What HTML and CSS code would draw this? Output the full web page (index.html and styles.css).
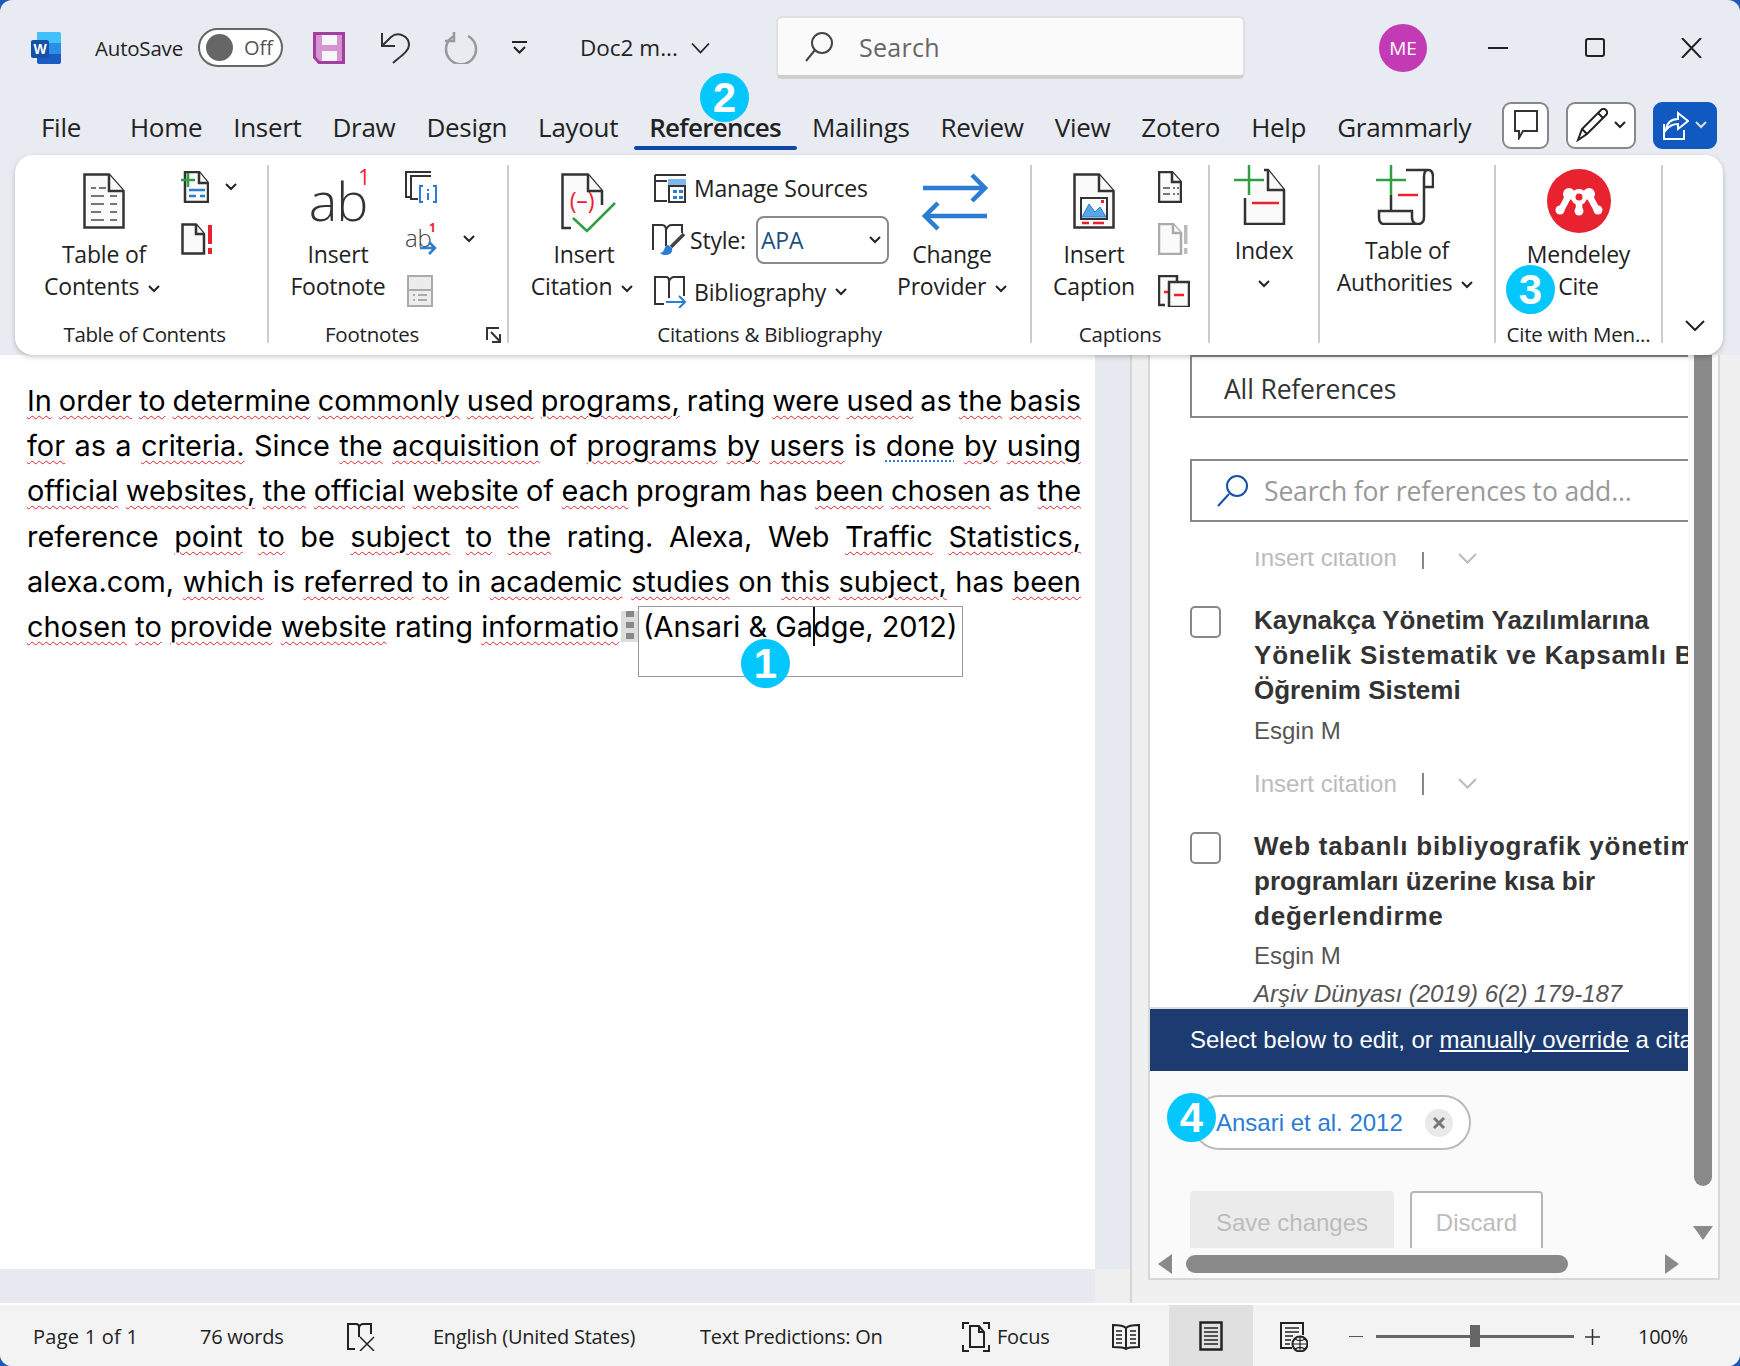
FILE: index.html
```html
<!DOCTYPE html>
<html lang="en">
<head>
<meta charset="utf-8"/>
<title>Doc2 - Word</title>
<link rel="stylesheet" href="styles.css">
</head>
<body>
<svg class="sprite"><symbol id="chev" viewBox="0 0 12 8"><path d="M1 1l5 5 5-5" fill="none" stroke="#222" stroke-width="2"/></symbol></svg>
<div class="app">

<!-- title bar -->
<header class="titlebar">
    <svg class="t-word" width="30" height="32" viewBox="0 0 30 32">
        <path d="M6 0h22a2 2 0 0 1 2 2v9H6z" fill="#41c0fa"/>
        <rect x="6" y="11" width="24" height="11" fill="#2a90e6"/>
        <path d="M6 22h24v8a2 2 0 0 1-2 2H8a2 2 0 0 1-2-2z" fill="#1a5cc4"/>
        <rect x="0" y="8" width="18" height="18" rx="2" fill="#144fa8"/>
        <text x="9" y="22" text-anchor="middle" class="svgword">W</text>
    </svg>
    <span class="t-auto">AutoSave</span>
    <div class="toggle"><i></i><span>Off</span></div>
    <svg class="t-save" width="32" height="32" viewBox="0 0 32 32">
        <path d="M1.500 1.500h29v29H6l-4.500-5z" fill="#d693d2" stroke="#a23ea0" stroke-width="3"/>
        <rect x="9" y="3" width="15" height="10" fill="#f6f6f8"/>
        <rect x="9" y="19" width="15" height="10" fill="#f6f6f8"/>
    </svg>
    <svg class="t-undo" width="32" height="32" viewBox="0 0 32 32" fill="none" stroke="#333" stroke-width="2">
        <path d="M3 1V14H16"/><path d="M3 14L12 5C19-1 30 4 30 13C30 19 22 24 14 31"/>
    </svg>
    <svg class="t-redo" width="34" height="32" viewBox="0 0 34 32" fill="none" stroke="#999" stroke-width="2.500">
        <path d="M10 4A15 15 0 1 0 24 4"/><path d="M10 0V9H1"/>
    </svg>
    <svg class="t-more" width="15" height="13" viewBox="0 0 15 13" fill="none" stroke="#222" stroke-width="2">
        <path d="M0 1H15"/><path d="M2 6l5.500 5.500L13 6"/>
    </svg>
    <span class="t-doc">Doc2 m...</span>
    <svg class="t-docchev" width="19" height="12" viewBox="0 0 19 12" fill="none" stroke="#222" stroke-width="1.800"><path d="M1 1.500l8.500 9 8.500-9"/></svg>
    <div class="t-search">
        <svg width="28" height="30" viewBox="0 0 28 30" fill="none" stroke="#444" stroke-width="2"><circle cx="17" cy="11" r="10"/><path d="M10 18L1 29"/></svg>
        <span>Search</span>
    </div>
    <div class="avatar">ME</div>
    <svg class="w-min" width="20" height="2"><rect width="20" height="2" fill="#222"/></svg>
    <svg class="w-max" width="20" height="19" viewBox="0 0 20 19" fill="none" stroke="#222" stroke-width="2"><rect x="1" y="1" width="18" height="17" rx="2"/></svg>
    <svg class="w-close" width="21" height="20" viewBox="0 0 21 20" fill="none" stroke="#222" stroke-width="2"><path d="M1 0L20 20M20 0L1 20"/></svg>
</header>

<!-- tabs -->
<nav class="tabs">
    <span class="tab tab-file">File</span>
    <span class="tab">Home</span>
    <span class="tab">Insert</span>
    <span class="tab">Draw</span>
    <span class="tab">Design</span>
    <span class="tab">Layout</span>
    <span class="tab on">References</span>
    <span class="tab">Mailings</span>
    <span class="tab">Review</span>
    <span class="tab">View</span>
    <span class="tab">Zotero</span>
    <span class="tab">Help</span>
    <span class="tab">Grammarly</span>
    <div class="tabs-btns">
        <div class="tbtn tbtn-c">
            <svg width="24" height="30" viewBox="0 0 24 30" fill="none" stroke="#333" stroke-width="2"><path d="M1 1H23V21H9L5 28V21H1Z"/></svg>
        </div>
        <div class="tbtn tbtn-p">
            <svg width="32" height="34" viewBox="0 0 32 34" fill="none" stroke="#222" stroke-width="2"><path d="M2 32L6 21L25 2C27 0 29 1 30 2C31 3 32 5 30 7L11 26Z"/><path d="M6 21L11 26M22 5L27 10"/></svg>
            <svg width="12" height="8"><use href="#chev"/></svg>
        </div>
        <div class="tbtn tbtn-s">
            <svg width="26" height="30" viewBox="0 0 26 30" fill="none" stroke="#fff" stroke-width="2"><path d="M1 14V29H21V20"/><path d="M3 20C4 12 9 9 15 9V3L25 11L15 19V14C10 14 6 16 3 20Z"/></svg>
            <svg class="wchev" width="12" height="8"><use href="#chev"/></svg>
        </div>
    </div>
</nav>

<!-- ribbon -->
<section class="ribbon">
    <div class="grp grp-toc">
        <div class="grp-body">
            <div class="big">
                <div class="ic">
                    <svg width="42" height="56" viewBox="0 0 42 56">
                        <path class="ik" d="M1.500 1.500H26L40.500 18V54.500H1.500Z"/><path class="ik" d="M26 1.500V18H40.500"/>
                        <path class="gl" d="M8 15h5M16 15h7M8 23h13M27 23h7M8 31h13M27 31h7M8 39h10M27 39h7M8 47h13M27 47h7"/>
                    </svg>
                </div>
                <span>Table of</span>
                <span class="ch">Contents <svg class="chev" width="12" height="8"><use href="#chev"/></svg></span>
            </div>
            <div class="col col-toc">
                <div class="smrow">
                    <svg width="28" height="32" viewBox="0 0 28 32">
                        <path class="ik" d="M4 1H18L27 12V31H4Z"/><path class="ik" d="M18 1V12H27"/>
                        <path d="M0 9H14M7 2V16" fill="none" stroke="#2f9e44" stroke-width="2.500"/>
                        <path d="M8 19H24M8 25H15M19 25H24" fill="none" stroke="#2b7cd3" stroke-width="2.500"/>
                    </svg>
                    <svg class="chev chev-r" width="12" height="8"><use href="#chev"/></svg>
                </div>
                <div class="smrow">
                    <svg width="34" height="32" viewBox="0 0 34 32">
                        <path class="ik" d="M1.500 1.500H15L23 11V30.500H1.500Z"/><path class="ik" d="M15 1.500V11H23"/>
                        <path d="M27 2h4v19h-4zM27 25h4v6h-4z" fill="#e8222f"/>
                    </svg>
                </div>
            </div>
        </div>
        <div class="lbl">Table of Contents</div>
    </div>

    <div class="grp grp-fn">
        <div class="grp-body">
            <div class="big">
                <div class="ic ic-ab"><span class="ab">ab</span><sup class="ab-n">1</sup></div>
                <span>Insert</span>
                <span>Footnote</span>
            </div>
            <div class="col col-fn">
                <div class="smrow">
                    <svg width="32" height="32" viewBox="0 0 32 32" fill="none">
                        <path d="M26 1H1V26H5M26 5H6V28H13" stroke="#333" stroke-width="2"/>
                        <path d="M18 15H15V31H18M28 15H31V31H28" stroke="#2b7cd3" stroke-width="2"/>
                        <path d="M23 18v2M23 22v7" stroke="#2b7cd3" stroke-width="2"/>
                    </svg>
                </div>
                <div class="smrow">
                    <svg width="32" height="32" viewBox="0 0 32 32" fill="none">
                        <text x="0" y="24" class="svgab">ab</text>
                        <text x="24" y="9" class="svgone">1</text>
                        <path d="M15 25H30M24 19l6 6-6 6" stroke="#2b7cd3" stroke-width="2.500"/>
                    </svg>
                    <svg class="chev chev-fn" width="12" height="8"><use href="#chev"/></svg>
                </div>
                <div class="smrow smrow-off">
                    <svg width="26" height="32" viewBox="0 0 26 32">
                        <rect x="1" y="1" width="24" height="30" fill="#ececec" stroke="#aaa" stroke-width="2"/>
                        <path d="M1 15H25" stroke="#aaa" stroke-width="2"/>
                        <path d="M6 20h2M11 20h9M6 25h2M11 25h9" stroke="#aaa" stroke-width="2"/>
                    </svg>
                </div>
            </div>
        </div>
        <div class="lbl lbl-fn">Footnotes</div>
        <svg class="launch" width="15" height="16" viewBox="0 0 15 16" fill="none" stroke="#333" stroke-width="2"><path d="M1 13V1H13"/><path d="M5 5L14 14.500M14 7V15H6"/></svg>
    </div>

    <div class="grp grp-cite">
        <div class="grp-body">
            <div class="big">
                <div class="ic ic-cite">
                    <svg width="56" height="60" viewBox="0 0 56 60" fill="none">
                        <path class="ik" d="M10 55H1.500V1.500H27L41 18V32"/><path class="ik" d="M27 1.500V18H41"/>
                        <text x="21" y="36" text-anchor="middle" class="svgparen">(–)</text>
                        <path d="M12 45L26 58L54 30" stroke="#2f9e44" stroke-width="2.500"/>
                    </svg>
                </div>
                <span>Insert</span>
                <span class="ch">Citation <svg class="chev" width="12" height="8"><use href="#chev"/></svg></span>
            </div>
            <div class="col col-cite">
                <div class="row">
                    <svg width="32" height="30" viewBox="0 0 32 30" fill="none">
                        <path d="M1 2H32M1 2V28H13M1 8H13" stroke="#333" stroke-width="2"/>
                        <rect x="14" y="6" width="18" height="6" fill="#7db8ea"/>
                        <rect x="15" y="13" width="16" height="16" fill="#fff" stroke="#333" stroke-width="2"/>
                        <path d="M19 17h4v3h-4zM19 23h4v3h-4zM25 17h4v3h-4zM25 23h4v3h-4z" fill="#2b7cd3"/>
                    </svg>
                    <span class="row-t">Manage Sources</span>
                </div>
                <div class="row row-style">
                    <svg width="34" height="32" viewBox="0 0 34 32" fill="none">
                        <path d="M1 26V1H10C13 1 14 3 14 6C15 3 17 1 20 1H30V9M14 6V22" stroke="#333" stroke-width="2"/>
                        <path d="M32 10L19 23" stroke="#444" stroke-width="3.500"/>
                        <path d="M16 21C11 22 14 28 8 29C12 33 22 31 20 24Z" fill="#2b7cd3"/>
                    </svg>
                    <span class="row-s">Style:</span>
                    <div class="sel"><span>APA</span><svg width="12" height="8"><use href="#chev"/></svg></div>
                </div>
                <div class="row">
                    <svg width="32" height="32" viewBox="0 0 32 32" fill="none">
                        <path d="M10 28H1V1H12C14 1 15 3 15 5C16 3 17 1 20 1H30V20M15 5V22" stroke="#333" stroke-width="2"/>
                        <path d="M12 26H31M25 20l6 6-6 6" stroke="#2b7cd3" stroke-width="2"/>
                    </svg>
                    <span class="row-t">Bibliography</span>
                    <svg class="chev" width="12" height="8"><use href="#chev"/></svg>
                </div>
            </div>
            <div class="big">
                <div class="ic ic-prov">
                    <svg width="66" height="58" viewBox="0 0 66 58" fill="none" stroke="#2b7cd3" stroke-width="4.500">
                        <path d="M1 15H62M50 2L63 15L50 28"/><path d="M65 43H4M16 30L3 43L16 56"/>
                    </svg>
                </div>
                <span>Change</span>
                <span>Provider <svg class="chev" width="12" height="8"><use href="#chev"/></svg></span>
            </div>
        </div>
        <div class="lbl">Citations &amp; Bibliography</div>
    </div>

    <div class="grp grp-cap">
        <div class="grp-body">
            <div class="big">
                <div class="ic">
                    <svg width="42" height="56" viewBox="0 0 42 56">
                        <path class="ik" d="M1.500 1.500H26L40.500 18V54.500H1.500Z"/><path class="ik" d="M26 1.500V18H40.500"/>
                        <rect x="8" y="25" width="26" height="21" fill="#fff" stroke="#333" stroke-width="2"/>
                        <path d="M9 44L16 31L22 39L27 34L33 44Z" fill="#5aa6e6" stroke="#2b7cd3"/>
                        <path d="M28 27h3v3h-3z" fill="#e8222f"/>
                        <path d="M9 50h7M20 50h11" stroke="#e8222f" stroke-width="2.500"/>
                    </svg>
                </div>
                <span>Insert</span>
                <span>Caption</span>
            </div>
            <div class="col col-cap">
                <div class="smrow">
                    <svg width="24" height="32" viewBox="0 0 24 32">
                        <path class="ik" d="M1 1H14L23 11V31H1Z"/><path class="ik" d="M14 1V11H23"/>
                        <path class="gl" d="M5 17h7M15 17h2M19 17h2M5 23h7M15 23h2M19 23h2"/>
                    </svg>
                </div>
                <div class="smrow">
                    <svg width="32" height="32" viewBox="0 0 32 32">
                        <path class="ik off" d="M1 1H15L23 10V31H1Z"/><path class="ik off" d="M15 1V10H23"/>
                        <path d="M26 2h3.500v19H26zM26 25h3.500v6H26z" fill="#bbb"/>
                    </svg>
                </div>
                <div class="smrow">
                    <svg width="32" height="32" viewBox="0 0 32 32">
                        <path class="ik" d="M7 30H1V1H19V6"/>
                        <rect x="11" y="7" width="20" height="25" class="ik"/>
                        <path d="M6 17h4" stroke="#e8222f" stroke-width="2.500"/>
                        <path d="M16 20h10" stroke="#e8222f" stroke-width="2.500"/>
                    </svg>
                </div>
            </div>
        </div>
        <div class="lbl">Captions</div>
    </div>

    <div class="grp grp-idx">
        <div class="grp-body">
            <div class="big big-tall">
                <div class="ic ic-idx">
                    <svg width="52" height="60" viewBox="0 0 52 60" fill="none">
                        <path class="ik" d="M11 33V59H50V25L34 5H30"/><path class="ik" d="M34 5V25H50"/>
                        <path d="M0 15H30M15 0V30" stroke="#2f9e44" stroke-width="2.500"/>
                        <path d="M18 38H45" stroke="#e8222f" stroke-width="2.500"/>
                    </svg>
                </div>
                <span>Index</span>
                <span class="chev-line"><svg class="chev" width="12" height="8"><use href="#chev"/></svg></span>
            </div>
        </div>
    </div>

    <div class="grp grp-auth">
        <div class="grp-body">
            <div class="big big-tall">
                <div class="ic ic-auth">
                    <svg width="58" height="60" viewBox="0 0 58 60" fill="none">
                        <path class="ik" d="M15 30V46H36V52C36 56 38 59 42 59H8C4 59 3 55 3 52V46H15"/>
                        <path d="M30 5H52C56 5 57 8 57 12V22H49M52 5C49 5 48 8 48 12V52C48 56 46 59 42 59" stroke="#333" stroke-width="2.500"/>
                        <path d="M0 15H30M15 0V30" stroke="#2f9e44" stroke-width="2.500"/>
                        <path d="M22 30H42" stroke="#e8222f" stroke-width="2.500"/>
                    </svg>
                </div>
                <span>Table of</span>
                <span class="ch">Authorities <svg class="chev" width="12" height="8"><use href="#chev"/></svg></span>
            </div>
        </div>
    </div>

    <div class="grp grp-men">
        <div class="grp-body">
            <div class="big big-men">
                <div class="ic">
                    <svg width="64" height="64" viewBox="0 0 64 64">
                        <ellipse cx="32" cy="32" rx="32" ry="32" fill="#e8222f"/>
                        <g fill="none" stroke="#fff" stroke-width="6.500" stroke-linecap="round">
                            <path d="M14 41L22 26M50 41L42 26M32 30V41M22 26H42"/>
                        </g>
                        <circle cx="22" cy="25" r="6" fill="#fff"/><circle cx="42" cy="25" r="6" fill="#fff"/><circle cx="32" cy="28" r="8" fill="#fff"/>
                        <circle cx="13" cy="41" r="4.500" fill="#fff"/><circle cx="32" cy="42" r="4.500" fill="#fff"/><circle cx="51" cy="41" r="4.500" fill="#fff"/>
                        <circle cx="32" cy="28" r="3.500" fill="#e8222f"/>
                    </svg>
                </div>
                <span>Mendeley</span>
                <span>Cite</span>
            </div>
        </div>
        <div class="lbl">Cite with Men...</div>
    </div>

    <div class="collapse">
        <svg width="20" height="11" viewBox="0 0 20 11" fill="none" stroke="#222" stroke-width="2"><path d="M1 1l9 9 9-9"/></svg>
    </div>
</section>

<!-- document + task pane -->
<main class="main">
    <article class="page">
        <div class="ln"><u>In</u> <u>order</u> <u>to</u> <u>determine</u> <u>commonly</u> <u>used</u> <u>programs,</u> rating <u>were</u> <u>used</u> as <u>the</u> <u>basis</u></div>
        <div class="ln"><u>for</u> as a <u>criteria.</u> Since <u>the</u> <u>acquisition</u> of <u>programs</u> <u>by</u> <u>users</u> is <u class="gr">done</u> <u>by</u> <u>using</u></div>
        <div class="ln"><u>official</u> <u>websites,</u> <u>the</u> <u>official</u> <u>website</u> of <u>each</u> program has <u>been</u> <u>chosen</u> as <u>the</u></div>
        <div class="ln">reference <u>point</u> <u>to</u> be <u>subject</u> <u>to</u> <u>the</u> rating. Alexa, Web <u>Traffic</u> <u>Statistics,</u></div>
        <div class="ln">alexa.com, <u>which</u> is <u>referred</u> <u>to</u> in <u>academic</u> <u>studies</u> on <u>this</u> <u>subject,</u> has <u>been</u></div>
        <div class="ln ln-last"><u>chosen</u> <u>to</u> <u>provide</u> <u>website</u> rating <u>informatio</u><span class="handle"></span><span class="cite">(Ansari &amp; Ga<i class="caret"></i>dge, 2012)</span></div>
    </article>
    <div class="gutter"></div>
    <div class="strip"></div>
    <div class="corner"></div>

    <aside class="pane">
        <div class="frame">
            <div class="frame-top">
                <div class="content">
                    <div class="box box-all">All References</div>
                    <div class="box box-search">
                        <svg width="34" height="34" viewBox="0 0 34 34" fill="none" stroke="#1450a8" stroke-width="2"><circle cx="21" cy="12" r="10"/><path d="M13 20L2 32"/></svg>
                        <span>Search for references to add...</span>
                    </div>
                    <div class="list">
                        <div class="acts acts-stub"><span>Insert citation</span><i></i><svg width="19" height="11" viewBox="0 0 19 11" fill="none" stroke="#bbb" stroke-width="2"><path d="M1 1l8.500 8.500L18 1"/></svg></div>
                        <div class="item">
                            <div class="cb"></div>
                            <div class="item-t">
                                <div class="ttl">Kaynakça Yönetim Yazılımlarına<br><span class="wd">Yönelik Sistematik ve Kapsamlı Bir</span><br>Öğrenim Sistemi</div>
                                <div class="auth">Esgin M</div>
                                <div class="acts"><span>Insert citation</span><i></i><svg width="19" height="11" viewBox="0 0 19 11" fill="none" stroke="#bbb" stroke-width="2"><path d="M1 1l8.500 8.500L18 1"/></svg></div>
                            </div>
                        </div>
                        <div class="item item2">
                            <div class="cb"></div>
                            <div class="item-t">
                                <div class="ttl"><span class="wd">Web tabanlı bibliyografik yönetim</span><br>programları üzerine kısa bir<br><span class="wd">değerlendirme</span></div>
                                <div class="auth">Esgin M</div>
                                <div class="jrn">Arşiv Dünyası (2019) 6(2) 179-187</div>
                            </div>
                        </div>
                    </div>
                    <div class="banner">Select below to edit, or <a>manually override</a> a citation</div>
                    <div class="below">
                        <div class="chip">
                            <span>Ansari et al. 2012</span>
                            <i class="chip-x"><svg width="14" height="14" viewBox="0 0 14 14" fill="none" stroke="#777" stroke-width="3"><path d="M2 2l10 10M12 2L2 12"/></svg></i>
                        </div>
                        <div class="acts-btns">
                            <div class="btn btn-save">Save changes</div>
                            <div class="btn btn-disc">Discard</div>
                        </div>
                    </div>
                </div>
                <div class="vbar">
                    <div class="vthumb"></div>
                    <div class="tri tri-d"></div>
                </div>
            </div>
            <div class="hbar">
                <div class="tri tri-l"></div>
                <div class="hthumb"></div>
                <div class="tri tri-r"></div>
            </div>
        </div>
    </aside>
</main>

<!-- status bar -->
<footer class="status">
    <span class="s-page">Page 1 of 1</span>
    <span class="s-words">76 words</span>
    <svg class="s-proof" width="28" height="28" viewBox="0 0 28 28" fill="none" stroke="#222" stroke-width="2"><path d="M8 26H1V1H9C11 1 12 2 12 4C13 2 14 1 16 1H24V11M12 4V14"/><path d="M13 14L27 28M27 14L13 28" stroke-width="1.500"/></svg>
    <span class="s-lang">English (United States)</span>
    <span class="s-pred">Text Predictions: On</span>
    <svg class="s-focus" width="28" height="30" viewBox="0 0 28 30" fill="none" stroke="#222" stroke-width="2"><path d="M1 7V1H7M21 1H27V7M1 23V29H7M21 29H27V23"/><path d="M8 25V4H17L22 10V25ZM17 4V10H22"/></svg>
    <span class="s-ft">Focus</span>
    <svg class="s-read" width="28" height="26" viewBox="0 0 28 26" fill="none" stroke="#222" stroke-width="2"><path d="M14 4C12 2 6 1 1 1V23C6 23 12 23 14 25C16 23 22 23 27 23V1C22 1 16 2 14 4ZM14 4V25"/><path d="M4 7h6M4 11h6M4 15h6M4 19h6M18 7h6M18 11h6M18 15h6M18 19h6" stroke-width="1.500"/></svg>
    <div class="s-print">
        <svg width="24" height="30" viewBox="0 0 24 30" fill="none" stroke="#222" stroke-width="2.500"><rect x="1.500" y="1.500" width="21" height="27"/><path d="M5 7h14M5 11h14M5 15h14M5 19h14M5 23h14" stroke-width="1.500"/></svg>
    </div>
    <svg class="s-web" width="28" height="30" viewBox="0 0 28 30" fill="none" stroke="#222" stroke-width="2"><path d="M12 26H1V1H23V13"/><path d="M5 6h14M5 10h14M5 14h8M5 18h6M5 22h5" stroke-width="1.500"/><circle cx="20" cy="22" r="7.500" fill="#f3f3f3"/><path d="M12.500 22H27.500M20 14.500V29.500M15 17C18 19 22 19 25 17M15 27C18 25 22 25 25 27" stroke-width="1.200"/></svg>
    <span class="s-minus"></span>
    <div class="s-slider"><i></i></div>
    <svg class="s-plus" width="15" height="20" viewBox="0 0 15 20" stroke="#333" stroke-width="1.500"><path d="M0 10H15M7.500 2V18"/></svg>
    <span class="s-zoom">100%</span>
</footer>

<!-- numbered callouts -->
<div class="badge b1">1</div>
<div class="badge b2">2</div>
<div class="badge b3">3</div>
<div class="badge b4">4</div>
</div>
</body>
</html>
```

FILE: styles.css
```css
*{margin:0;padding:0;box-sizing:border-box;}
html,body{width:1740px;height:1366px;overflow:hidden;background:#1a5bb8;}
i{font-style:normal;}
.sprite{display:none;}

.app{
    position:relative;overflow:hidden;
    display:flex;flex-direction:column;
    width:1740px;height:1366px;
    background:#e8ebf1;
    border-radius:12px;
    font-family:"Open Sans","Noto Sans",sans-serif;
    color:#222;
}

/* title bar */
.titlebar{
    flex:none;display:flex;align-items:center;
    height:95px;padding:0 0 0 31px;
}
.t-auto{margin-left:34px;font-size:20.500px;letter-spacing:-.2px;}
.toggle{
    display:flex;align-items:center;
    width:85px;height:39px;margin-left:15px;padding:0 0 0 6px;
    background:#fff;border:2px solid #666;border-radius:20px;
}
.toggle i{width:27px;height:27px;background:#666;border-radius:50%;}
.toggle span{margin-left:11px;font-size:20px;color:#555;}
.t-save{margin-left:30px;}
.t-undo{margin-left:34px;}
.t-redo{margin-left:33px;}
.t-more{margin-left:34px;}
.t-doc{margin-left:53px;font-size:22.500px;width:101px;white-space:nowrap;}
.t-docchev{margin-left:10px;}
.t-search{
    display:flex;align-items:center;
    width:469px;height:63px;margin-left:66px;padding:0 0 0 27px;
    background:#fafafa;
    border:2px solid #e0e0e0;border-bottom:4px solid #cfcfcf;border-radius:6px;
}
.t-search span{margin-left:26px;font-size:25px;color:#666;letter-spacing:.3px;}
.avatar{
    display:flex;justify-content:center;align-items:center;
    width:48px;height:48px;margin-left:134px;
    background:#c33bb4;border-radius:50%;
    font-size:19px;color:#fff;
}
.w-min{margin-left:61px;}
.w-max{margin-left:77px;}
.w-close{margin-left:76px;}

/* tabs */
.tabs{
    flex:none;display:flex;align-items:center;
    height:60px;padding:0 25px 0 41px;
}
.tab{position:relative;padding-top:3px;font-size:26px;letter-spacing:-.3px;margin-right:31px;white-space:nowrap;}
.tab-file{margin-right:49px;}
.tab.on{font-weight:600;letter-spacing:-.75px;}
.tab.on::after{
    content:"";position:absolute;
    left:-15px;right:-16px;bottom:-5px;height:4px;
    background:#0e47a8;border-radius:2px;
}
.tabs-btns{display:flex;gap:17px;margin-left:auto;}
.tbtn{
    display:flex;justify-content:center;align-items:center;gap:6px;
    height:47px;background:#fff;
    border:2px solid #888;border-radius:9px;
}
.tbtn-c{width:47px;}
.tbtn-p{width:70px;}
.tbtn-s{width:64px;background:#1059c0;border-color:#1059c0;}
.wchev{filter:invert(1);}

/* ribbon */
.ribbon{
    position:relative;z-index:3;
    flex:none;display:flex;
    width:1708px;height:200px;margin-left:15px;padding:10px 0 12px;
    background:#fff;border-radius:18px;
    box-shadow:0 2px 5px rgba(0,0,0,.22);
    font-size:23px;letter-spacing:-.2px;
}
.grp{
    position:relative;
    flex:none;display:flex;flex-direction:column;
    height:178px;
    border-right:2px solid #ccc;
}
.grp-toc{width:254px;padding-left:29px;}
.grp-fn{width:240px;padding-left:9px;}
.grp-cite{width:523px;padding-left:15px;}
.grp-cap{width:178px;padding-left:12px;}
.grp-idx{width:110px;}
.grp-auth{width:176px;}
.grp-men{width:167px;}
.grp-body{display:flex;}
.lbl{
    margin-top:auto;
    line-height:18px;text-align:center;
    font-size:20.500px;letter-spacing:-.2px;white-space:nowrap;
}
.grp-toc .lbl{margin-left:-29px;padding-left:7px;letter-spacing:-.35px;}
.grp-fn .lbl{margin-left:-9px;padding-right:32px;}
.grp-cite .lbl{margin-left:-15px;}
.grp-cap .lbl{margin-left:-12px;}
.launch{position:absolute;right:6px;bottom:0;}

.big{
    flex:none;display:flex;flex-direction:column;align-items:center;
    width:120px;
    line-height:32px;white-space:nowrap;
}
.big .ic{height:73px;padding-top:8px;}
.big .ch{padding-right:4px;}
.big-tall{width:100%;}
.big-tall .ic{height:69px;padding-top:0;}
.big-men{width:100%;}
.big-men .ic{padding-top:4px;}
.big .ic-cite{margin-left:10px;}
.big .ic-prov{margin-left:6px;}
.big .ic-idx{margin-right:8px;}
.big .ic-auth{margin-right:4px;}
.grp-cap .big{width:100px;}
.grp-idx .grp-body,.grp-auth .grp-body,.grp-men .grp-body{width:100%;}
.chev{margin-left:3px;vertical-align:2px;}
.chev-line{line-height:30px;}
.chev-line .chev{margin:0;}

.ic-ab{position:relative;width:70px;text-align:center;}
.ab{font-size:54px;font-weight:300;line-height:54px;letter-spacing:-1px;color:#333;}
.ab-n{position:absolute;right:3px;top:0;font-size:21px;line-height:24px;color:#f0202c;font-weight:400;}

.col{flex:none;display:flex;flex-direction:column;gap:20px;padding-top:6px;}
.col-toc{margin-left:17px;}
.col-fn{margin-left:7px;}
.col-cap{margin-left:14px;}
.smrow{display:flex;align-items:center;height:32px;}
.smrow-off{padding-left:2px;}
.chev-r{margin-left:16px;}
.chev-fn{margin-left:26px;}

.col-cite{width:240px;margin-left:8px;padding-top:7px;}
.row{display:flex;align-items:center;height:32px;padding-left:2px;}
.row-t{margin-left:8px;white-space:nowrap;}
.row .chev{margin-left:9px;}
.row-style{padding-left:0;}
.row-s{margin-left:4px;}
.sel{
    flex:none;display:flex;justify-content:space-between;align-items:center;
    width:133px;height:48px;margin-left:10px;padding:0 6px 0 3px;
    border:2px solid #8a8a8a;border-radius:8px;
    color:#1b4f80;
}
.collapse{flex:1;display:flex;align-items:flex-end;padding:0 0 12px 22px;}

/* text inside small icons */
.svgword{font:700 14px "Liberation Sans",sans-serif;fill:#fff;}
.svgab{font:300 24px "Open Sans",sans-serif;fill:#444;}
.svgone{font:700 12px "Open Sans",sans-serif;fill:#e8222f;}
.svgparen{font:400 23px "Open Sans",sans-serif;fill:#e8222f;}
.ik{fill:#fafafa;stroke:#333;stroke-width:2.500;}
.ik.off{stroke:#aaa;}
.gl{fill:none;stroke:#777;stroke-width:2;}

/* document */
.main{
    flex:none;display:grid;
    grid-template-columns:1095px 35px 1fr;
    grid-template-rows:914px 34px;
    height:948px;
}
.page{
    grid-column:1;grid-row:1;
    padding:23px 14px 0 27px;
    background:#fff;
    font-family:"Inter","Noto Sans",sans-serif;
    font-size:28.900px;line-height:45.200px;color:#000;
}
.ln{text-align:justify;text-align-last:justify;word-spacing:-5px;}
.ln u{
    text-decoration:underline wavy #e0222a 1px;
    text-underline-offset:4px;
}
.ln u.gr{text-decoration:underline dotted #2b7cd3 2px;}
.ln-last{text-align-last:left;word-spacing:0;white-space:pre;}
.handle{
    display:inline-block;vertical-align:top;
    width:18px;height:31px;margin:7px 4px 0 2px;
    background:#ddd repeating-linear-gradient(#888 0,#888 6px,#ddd 6px,#ddd 11px) center/8px 100% no-repeat;
}
.cite{position:relative;display:inline-block;}
.cite::before{
    content:"";position:absolute;
    left:-5px;right:-6px;top:2px;height:69px;
    border:1.500px solid #999;
}
.caret{
    position:absolute;
    width:2px;height:39px;margin-top:3px;
    background:#111;
}
.gutter{grid-column:2;grid-row:1;background:#e6e9f0;}
.strip{grid-column:1;grid-row:2;background:#e6e9f0;}
.corner{grid-column:2;grid-row:2;background:#efefef;}

/* task pane */
.pane{
    grid-column:3;grid-row:1 / 3;
    padding-left:16px;
    background:#f0f0f0;
    border-left:2px solid #d6d6d6;
    font-family:"Liberation Sans",Arial,sans-serif;
}
.frame{
    display:flex;flex-direction:column;
    width:572px;height:925px;
    background:#fafafa;
    border:2px solid #d8d8d8;border-top:0;
}
.frame-top{flex:none;display:flex;height:893px;}
.content{
    flex:none;overflow:hidden;
    display:flex;flex-direction:column;
    width:538px;
    background:#fff;
}
.box{
    flex:none;display:flex;align-items:center;
    height:63px;margin-left:40px;
    border:solid #888;border-width:2px 0 2px 2px;
    font-family:"Open Sans",sans-serif;font-size:26.500px;letter-spacing:-.15px;
    white-space:nowrap;
}
.box-all{padding:4px 0 0 32px;color:#333;}
.box-search{margin-top:41px;padding-left:24px;color:#999;}
.box-search span{margin:1px 0 0 14px;}

.list{flex:none;height:457px;margin-top:30px;overflow:hidden;border-bottom:2px solid #ddd;}
.acts{
    display:flex;align-items:center;
    height:30px;margin-top:23px;
    font-size:24px;color:#bbb;
}
.acts i{width:2px;height:22px;margin-left:25px;background:#888;}
.acts svg{margin-left:34px;}
.acts-stub{margin-top:-9px;margin-left:104px;}
.item{display:flex;gap:33px;margin:30px 0 0 40px;}
.cb{flex:none;width:31px;height:32px;margin-top:3px;background:#fff;border:2px solid #888;border-radius:5px;}
.ttl{font-size:26px;font-weight:700;line-height:35.200px;color:#333;white-space:nowrap;}
.wd{letter-spacing:.8px;}
.auth{margin-top:7px;font-size:24px;line-height:30px;color:#555;}
.jrn{margin-top:8px;font-size:24px;line-height:30px;font-style:italic;color:#555;white-space:nowrap;}

.banner{
    flex:none;
    height:62px;padding-left:40px;
    background:#1c3b70;
    font-size:24px;line-height:61px;color:#fff;white-space:nowrap;
}
.banner a{text-decoration:underline;}
.below{flex:1;overflow:hidden;background:#fafafa;}
.chip{
    display:flex;align-items:center;justify-content:space-between;
    width:279px;height:55px;margin:24px 0 0 42px;padding:0 16px 0 22px;
    background:#fff;border:2px solid #bbb;border-radius:28px;
    font-size:24px;color:#2b7cd3;
}
.chip-x{display:flex;justify-content:center;align-items:center;width:28px;height:28px;background:#e9e9e9;border-radius:50%;}
.acts-btns{display:flex;gap:16px;margin:41px 0 0 40px;}
.btn{
    display:flex;justify-content:center;align-items:center;
    height:64px;
    font-size:24px;color:#bcbcbc;border-radius:4px;
}
.btn-save{width:204px;background:#ebebeb;}
.btn-disc{width:133px;background:#fff;border:2px solid #b5b5b5;}

.vbar{position:relative;flex:1;}
.vthumb{width:18px;height:831px;margin-left:6px;background:#8a8a8a;border-radius:0 0 9px 9px;}
.tri{width:0;height:0;border-style:solid;border-color:transparent;}
.tri-d{position:absolute;left:5px;bottom:8px;border-width:14px 10px 0;border-top-color:#8a8a8a;}
.hbar{flex:none;display:flex;align-items:center;height:30px;padding:2px 0 0 8px;}
.hthumb{width:382px;height:18px;margin-left:14px;background:#8a8a8a;border-radius:9px;}
.tri-l{border-width:10px 14px 10px 0;border-right-color:#8a8a8a;}
.tri-r{margin-left:97px;border-width:10px 0 10px 14px;border-left-color:#8a8a8a;}

/* status bar */
.status{
    flex:1;display:flex;align-items:center;
    padding:2px 0 0 33px;
    background:#f3f3f3;
    border-top:2px solid #fff;
    font-size:20px;letter-spacing:-.25px;color:#222;
}
.status span{white-space:nowrap;}
.s-page{width:104px;letter-spacing:.25px;}
.s-words{width:83px;margin-left:63px;}
.s-proof{margin-left:64px;}
.s-lang{width:207px;margin-left:58px;}
.s-pred{width:184px;margin-left:60px;}
.s-focus{margin-left:78px;}
.s-ft{width:52px;margin-left:7px;}
.s-read{margin-left:63px;}
.s-print{
    display:flex;justify-content:center;align-items:center;
    align-self:stretch;
    width:84px;margin:-2px 0 0 29px;
    background:#e0e0e0;
}
.s-web{margin-left:27px;}
.s-minus{width:14px;height:1.500px;margin-left:41px;background:#555;}
.s-slider{position:relative;width:198px;height:3px;margin-left:13px;background:#666;}
.s-slider i{position:absolute;left:94px;top:-10px;width:10px;height:22px;background:#666;}
.s-plus{margin-left:11px;}
.s-zoom{margin-left:38px;}

/* callouts */
.badge{
    position:absolute;z-index:5;
    display:flex;justify-content:center;align-items:center;
    width:49px;height:49px;
    background:#04c8fd;border-radius:50%;
    font-family:"Liberation Sans",sans-serif;font-size:42px;font-weight:700;color:#fff;
}
.b1{left:741px;top:639px;}
.b2{left:700px;top:73px;}
.b3{left:1506px;top:265px;}
.b4{left:1167px;top:1093px;}
```
